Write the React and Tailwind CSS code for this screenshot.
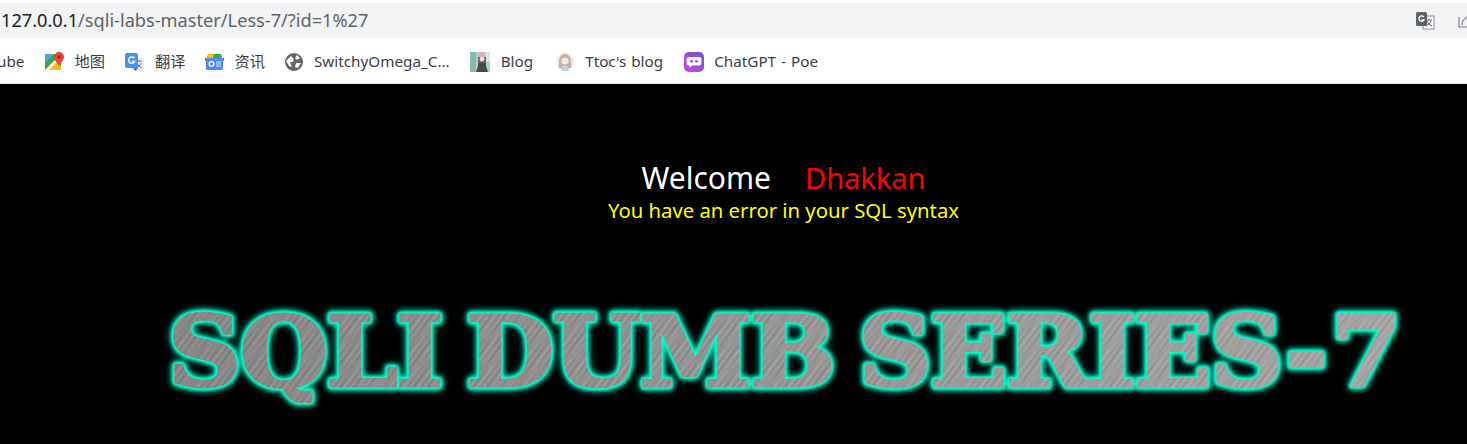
const MapsIcon = () => (
  <svg width="19" height="20" viewBox="0 0 19 20" className="shrink-0">
    <rect x="0" y="2" width="16" height="16" fill="#34a853" />
    <path d="M0 18 L10 8 L16 14 V18 Z" fill="#fbbc04" />
    <path d="M0 2 H9 L0 11 Z" fill="#4fa3e0" />
    <path d="M0 18 L16 2 V6 L4 18 Z" fill="#f4f4f4" />
    <path d="M14 0 a5 5 0 0 1 5 5 c0 3-3 5-5 9 c-2-4-5-6-5-9 a5 5 0 0 1 5-5 Z" fill="#ea4335" />
    <circle cx="14" cy="5" r="1.7" fill="#a52714" />
  </svg>
)

const TranslateIcon = () => (
  <svg width="20" height="20" viewBox="0 0 20 20" className="shrink-0">
    <rect x="8" y="6" width="11" height="13" rx="1" fill="#e8e8e8" />
    <path d="M11 9 h6 M14 9 v1 M12 11 c1 3 3 4 5 5 M16 11 c-1 3-3 4-5 5" stroke="#777" strokeWidth="1" fill="none" />
    <rect x="0" y="1" width="13" height="15" rx="2" fill="#4d8df6" />
    <path d="M9.5 6.5 A3.2 3.2 0 1 0 9.7 9.5 H6.8" stroke="#fff" strokeWidth="1.4" fill="none" />
    <path d="M8 16 L13 16 L10.5 19 Z" fill="#3a6fd0" />
  </svg>
)

const NewsIcon = () => (
  <svg width="19" height="18" viewBox="0 0 19 18" className="shrink-0">
    <path d="M3 1 H16 L17 5 H2 Z" fill="#34a853" />
    <path d="M3 1 H9 L8 5 H2 Z" fill="#fbbc04" />
    <path d="M0 5 H3 V8 H0 Z M16 5 H19 V8 H16 Z" fill="#ea4335" />
    <rect x="1" y="5" width="17" height="12" rx="1.5" fill="#4d8df6" />
    <circle cx="6.5" cy="11" r="2.4" fill="none" stroke="#fff" strokeWidth="1.2" />
    <path d="M11 9 h5 M11 11 h5 M11 13 h5" stroke="#dbe7fd" strokeWidth="1.1" />
  </svg>
)

const GlobeIcon = () => (
  <svg width="19" height="18" viewBox="0 0 19 18" className="shrink-0">
    <circle cx="9" cy="9" r="9" fill="#5f6368" />
    <path d="M1 8 L6 3 L9 6 L8 9 L5 9 L7 14 L4 13 Z" fill="#fff" />
    <path d="M12 2 L15 5 L12 7 L10 5 Z M11 10 L16 10 L13 15 L10 14 Z" fill="#fff" />
  </svg>
)

const BlogAvatar = () => (
  <svg width="20" height="20" viewBox="0 0 20 20" className="shrink-0 ml-[1px]">
    <rect width="20" height="20" fill="#a9d3cb" />
    <rect width="6" height="20" fill="#86b9b0" />
    <rect x="15" width="5" height="10" fill="#d5e8e0" />
    <circle cx="12" cy="3" r="3.500" fill="#e5a9bd" />
    <path d="M8 5 h8 v8 h-8 Z" fill="#6b5a60" />
    <circle cx="12" cy="7" r="2.500" fill="#f0dcd2" />
    <path d="M6 20 L9 11 H15 L18 20 Z" fill="#4a474c" />
  </svg>
)

const TtocAvatar = () => (
  <svg width="22" height="20" viewBox="-3 0 22 20" className="shrink-0">
    <circle cx="9" cy="10" r="9" fill="#ecebeb" />
    <path d="M3 9 a6 7 0 0 1 12 0 v7 h-12 Z" fill="#c9aea0" />
    <circle cx="9" cy="9" r="3.600" fill="#f5e6df" />
    <path d="M5 19 L6 14 H12 L13 19 Z" fill="#c3d5e3" />
  </svg>
)

const PoeIcon = () => (
  <svg width="20" height="20" viewBox="0 0 20 20" className="shrink-0 ml-[1px]">
    <defs>
      <linearGradient id="poeBg" x1="1" y1="0" x2="0" y2="1">
        <stop offset="0" stopColor="#5d5cde" />
        <stop offset="1" stopColor="#d53fe0" />
      </linearGradient>
    </defs>
    <rect width="20" height="20" rx="5" fill="url(#poeBg)" />
    <path d="M5 5 H15 A2.5 2.5 0 0 1 17.5 7.5 V11 A2.5 2.5 0 0 1 15 13.500 H8 L5.500 16 V13.500 H5 A2.500 2.500 0 0 1 2.500 11 V7.500 A2.500 2.500 0 0 1 5 5 Z" fill="#fff" />
    <rect x="6" y="8" width="3" height="2.600" rx="1" fill="#a44be0" />
    <rect x="11" y="8" width="3" height="2.600" rx="1" fill="#a44be0" />
  </svg>
)

const bookmarks = [
  { icon: <MapsIcon />, label: '地图' },
  { icon: <TranslateIcon />, label: '翻译' },
  { icon: <NewsIcon />, label: '资讯' },
  { icon: <GlobeIcon />, label: 'SwitchyOmega_C...' },
  { icon: <BlogAvatar />, label: 'Blog' },
  { icon: <TtocAvatar />, label: "Ttoc's blog" },
  { icon: <PoeIcon />, label: 'ChatGPT - Poe' },
]

export default function App() {
  return (
    <div className="w-[1467px] h-[444px] overflow-hidden bg-black font-['Noto_Sans','Noto_Sans_CJK_SC',sans-serif]">
      {/* address bar */}
      <div className="bg-white pt-[3px]">
        <div className="h-[35px] bg-[#f1f3f4] flex items-center justify-between pl-[1px] overflow-hidden">
          <div className="text-[18.200px] text-[#5f6368] whitespace-nowrap">
            <span className="text-[#202124]">127.0.0.1</span>/sqli-labs-master/Less-7/?id=1%27
          </div>
          <div className="flex items-center gap-[23px] -mr-[9px]">
            <svg width="19" height="18" viewBox="0 0 19 18">
              <rect x="7" y="4" width="11" height="13" fill="#fff" stroke="#8a8d91" />
              <path d="M10 8 h6 M13 7 v1 M11 9 c1 3 3 4 5 5 M15 9 c-1 3-3 4-5 5" stroke="#5f6368" strokeWidth="1" fill="none" />
              <rect x="0" y="0" width="11" height="14" rx="1.500" fill="#5f6368" />
              <path d="M7.800 5 A2.700 2.700 0 1 0 8 8 H5.500" stroke="#fff" strokeWidth="1.300" fill="none" />
            </svg>
            <svg width="18" height="18" viewBox="0 0 18 18" fill="none" stroke="#7a7d81" strokeWidth="1.200">
              <path d="M1 5 V15 H15" />
              <path d="M4 13 C4 8 8 4 15 4" />
            </svg>
          </div>
        </div>
      </div>

      {/* bookmarks bar */}
      <div className="h-[46px] bg-white border-b border-[#dcdcdc] flex items-center gap-[19.500px] pt-[2px] text-[15.250px] [word-spacing:1px] text-[#3c4043] whitespace-nowrap overflow-hidden">
        <span className="-ml-[3px] mr-[1.500px] w-[27px] text-right">ube</span>
        {bookmarks.map((b) => (
          <div key={b.label} className="flex items-center gap-[10.500px]">
            {b.icon}
            <span>{b.label}</span>
          </div>
        ))}
      </div>

      {/* page */}
      <div className="pt-[75px] pl-[100px] flex flex-col items-center">
        <div className="text-[30px] leading-[37px] whitespace-nowrap">
          <span className="text-white">Welcome</span>
          <span className="text-[#ff0000] text-[29px] ml-[34px]">Dhakkan</span>
        </div>
        <div className="text-[20.300px] leading-[28px] text-[#ffff00] whitespace-nowrap">
          You have an error in your SQL syntax
        </div>
      </div>
      <div className="pt-[77px] pl-[168px]">
        <div className="inline-block origin-left scale-x-[1.045] pr-[8px] whitespace-nowrap font-['DejaVu_Serif',serif] font-bold text-[97px] leading-[102px] tracking-[-1.500px] [word-spacing:-9px] text-transparent bg-clip-text bg-[linear-gradient(90deg,#00000018,#00000000_45%,#ffffff28),repeating-linear-gradient(128deg,#ffffff12_0px,#ffffff00_2px,#0000000e_3px,#ffffff00_5px),repeating-linear-gradient(122deg,#949191_0px,#9d9a9a_3px,#8e8b8b_5px,#a09e9e_9px,#949191_12px)] [-webkit-text-stroke:3px_transparent] [filter:drop-shadow(0_0_1px_#00ffcc)_drop-shadow(0_0_1px_#00ffcc)_drop-shadow(0_0_1px_#00ffcc)_drop-shadow(0_0_2px_#00f0c4)_drop-shadow(0_0_3px_#00b898)]">
          SQLI DUMB SERIES-<span className="ml-[5px]">7</span>
        </div>
      </div>
    </div>
  )
}
